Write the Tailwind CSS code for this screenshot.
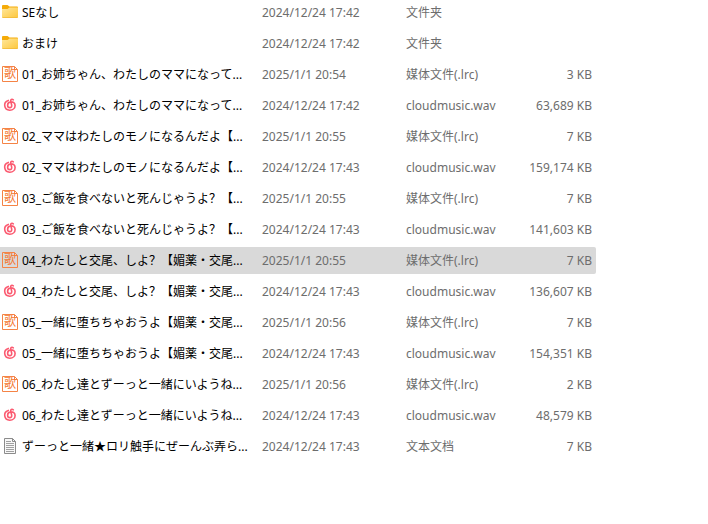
<!DOCTYPE html>
<html lang="zh-CN">
<head>
  <meta charset="UTF-8" />
  <meta name="viewport" content="width=device-width, initial-scale=1.0" />
  <title>文件列表</title>
  <script src="https://cdn.jsdelivr.net/npm/@tailwindcss/browser@4"></script>
</head>
<body class="bg-white min-h-screen overflow-hidden font-['Noto_Sans','Noto_Sans_CJK_SC',sans-serif]">

  <!-- Shared gradient for the folder icon -->
  <svg class="absolute size-0" aria-hidden="true">
    <defs>
      <linearGradient id="folderFill" x1="0" y1="0" x2="1" y2="1">
        <stop offset="0" stop-color="#ffe79b" />
        <stop offset="1" stop-color="#fdc73c" />
      </linearGradient>
    </defs>
  </svg>

  <table class="-mt-[5px] w-[596px] table-fixed border-separate border-spacing-x-0 border-spacing-y-1 text-xs text-[#6d6d6d] whitespace-nowrap">
    <colgroup>
      <col class="w-[262px]" />
      <col class="w-36" />
      <col class="w-28" />
      <col />
    </colgroup>
    <tbody id="files"></tbody>
  </table>

  <script>
    const icons = {
      folder: `
        <path fill="#f5ab09" d="M0 2a1 1 0 0 1 1-1h4.500l2 1.500H15a1 1 0 0 1 1 1V8H0z" />
        <path fill="url(#folderFill)" d="M0 5h5.500l2-1.500H16V13a1 1 0 0 1-1 1H1a1 1 0 0 1-1-1z" />
        <path fill="#f0b83a" d="M.2 13.300h15.600a1 1 0 0 1-.8.700H1a1 1 0 0 1-.8-.700z" />`,
      lyric: `
        <path fill="none" stroke="#f58345" d="M.5.5h12l3 3v12H.5z" />
        <path fill="none" stroke="#f58345" d="M12.500.5v3h3" />
        <text x="2" y="12" font-size="12" fill="#f4762e">歌</text>`,
      music: `
        <path fill="none" stroke="#fb5a70" stroke-width="1.600" stroke-linecap="round" d="M6.300 3.400A5 5 0 0 0 7.800 13.200C11 13.200 13.100 11 13.100 8.400 13.100 6 11 4.700 8.900 4.900 6.800 5.100 5.600 6.500 5.600 8.200c0 1.500 1 2.400 2.200 2.400 1.300 0 2.200-1 1.900-2.300L8.700 4c-.3-1.400 1.200-2.300 2.600-1.200" />`,
      text: `
        <path fill="#f8f8f8" stroke="#8b8b8b" d="M2.500.5h8l3 3v12h-11z" />
        <path fill="none" stroke="#8b8b8b" d="M10.500.5v3h3" />
        <path stroke="#a0a0a0" d="M4 3.500h5M4 5.500h8M4 7.500h8M4 9.500h8M4 11.500h8M4 13.500h8" />`,
    };

    // icon, name, modified, type, size, selected
    const files = [
      ["folder", "SEなし", "2024/12/24 17:42", "文件夹", ""],
      ["folder", "おまけ", "2024/12/24 17:42", "文件夹", ""],
      ["lyric", "01_お姉ちゃん、わたしのママになって...", "2025/1/1 20:54", "媒体文件(.lrc)", "3 KB"],
      ["music", "01_お姉ちゃん、わたしのママになって...", "2024/12/24 17:42", "cloudmusic.wav", "63,689 KB"],
      ["lyric", "02_ママはわたしのモノになるんだよ【...", "2025/1/1 20:55", "媒体文件(.lrc)", "7 KB"],
      ["music", "02_ママはわたしのモノになるんだよ【...", "2024/12/24 17:43", "cloudmusic.wav", "159,174 KB"],
      ["lyric", "03_ご飯を食べないと死んじゃうよ？【...", "2025/1/1 20:55", "媒体文件(.lrc)", "7 KB"],
      ["music", "03_ご飯を食べないと死んじゃうよ？【...", "2024/12/24 17:43", "cloudmusic.wav", "141,603 KB"],
      ["lyric", "04_わたしと交尾、しよ？【媚薬・交尾...", "2025/1/1 20:55", "媒体文件(.lrc)", "7 KB", true],
      ["music", "04_わたしと交尾、しよ？【媚薬・交尾...", "2024/12/24 17:43", "cloudmusic.wav", "136,607 KB"],
      ["lyric", "05_一緒に堕ちちゃおうよ【媚薬・交尾...", "2025/1/1 20:56", "媒体文件(.lrc)", "7 KB"],
      ["music", "05_一緒に堕ちちゃおうよ【媚薬・交尾...", "2024/12/24 17:43", "cloudmusic.wav", "154,351 KB"],
      ["lyric", "06_わたし達とずーっと一緒にいようね...", "2025/1/1 20:56", "媒体文件(.lrc)", "2 KB"],
      ["music", "06_わたし達とずーっと一緒にいようね...", "2024/12/24 17:43", "cloudmusic.wav", "48,579 KB"],
      ["text", "ずーっと一緒★ロリ触手にぜーんぶ弄ら...", "2024/12/24 17:43", "文本文档", "7 KB"],
    ];

    document.getElementById("files").innerHTML = files.map(([icon, name, date, type, size, selected]) => `
      <tr class="h-[27px] ${selected ? "bg-[#d9d9d9]" : ""}">
        <td class="p-0">
          <div class="flex h-[27px] items-center gap-1 pl-0.5 text-black">
            <svg class="size-4 shrink-0 mb-px" viewBox="0 0 16 16" aria-hidden="true">${icons[icon]}</svg>
            <span>${name}</span>
          </div>
        </td>
        <td class="p-0">${date}</td>
        <td class="p-0">${type}</td>
        <td class="p-0 pr-1 text-right rounded-r-xs">${size}</td>
      </tr>`).join("");
  </script>
</body>
</html>
